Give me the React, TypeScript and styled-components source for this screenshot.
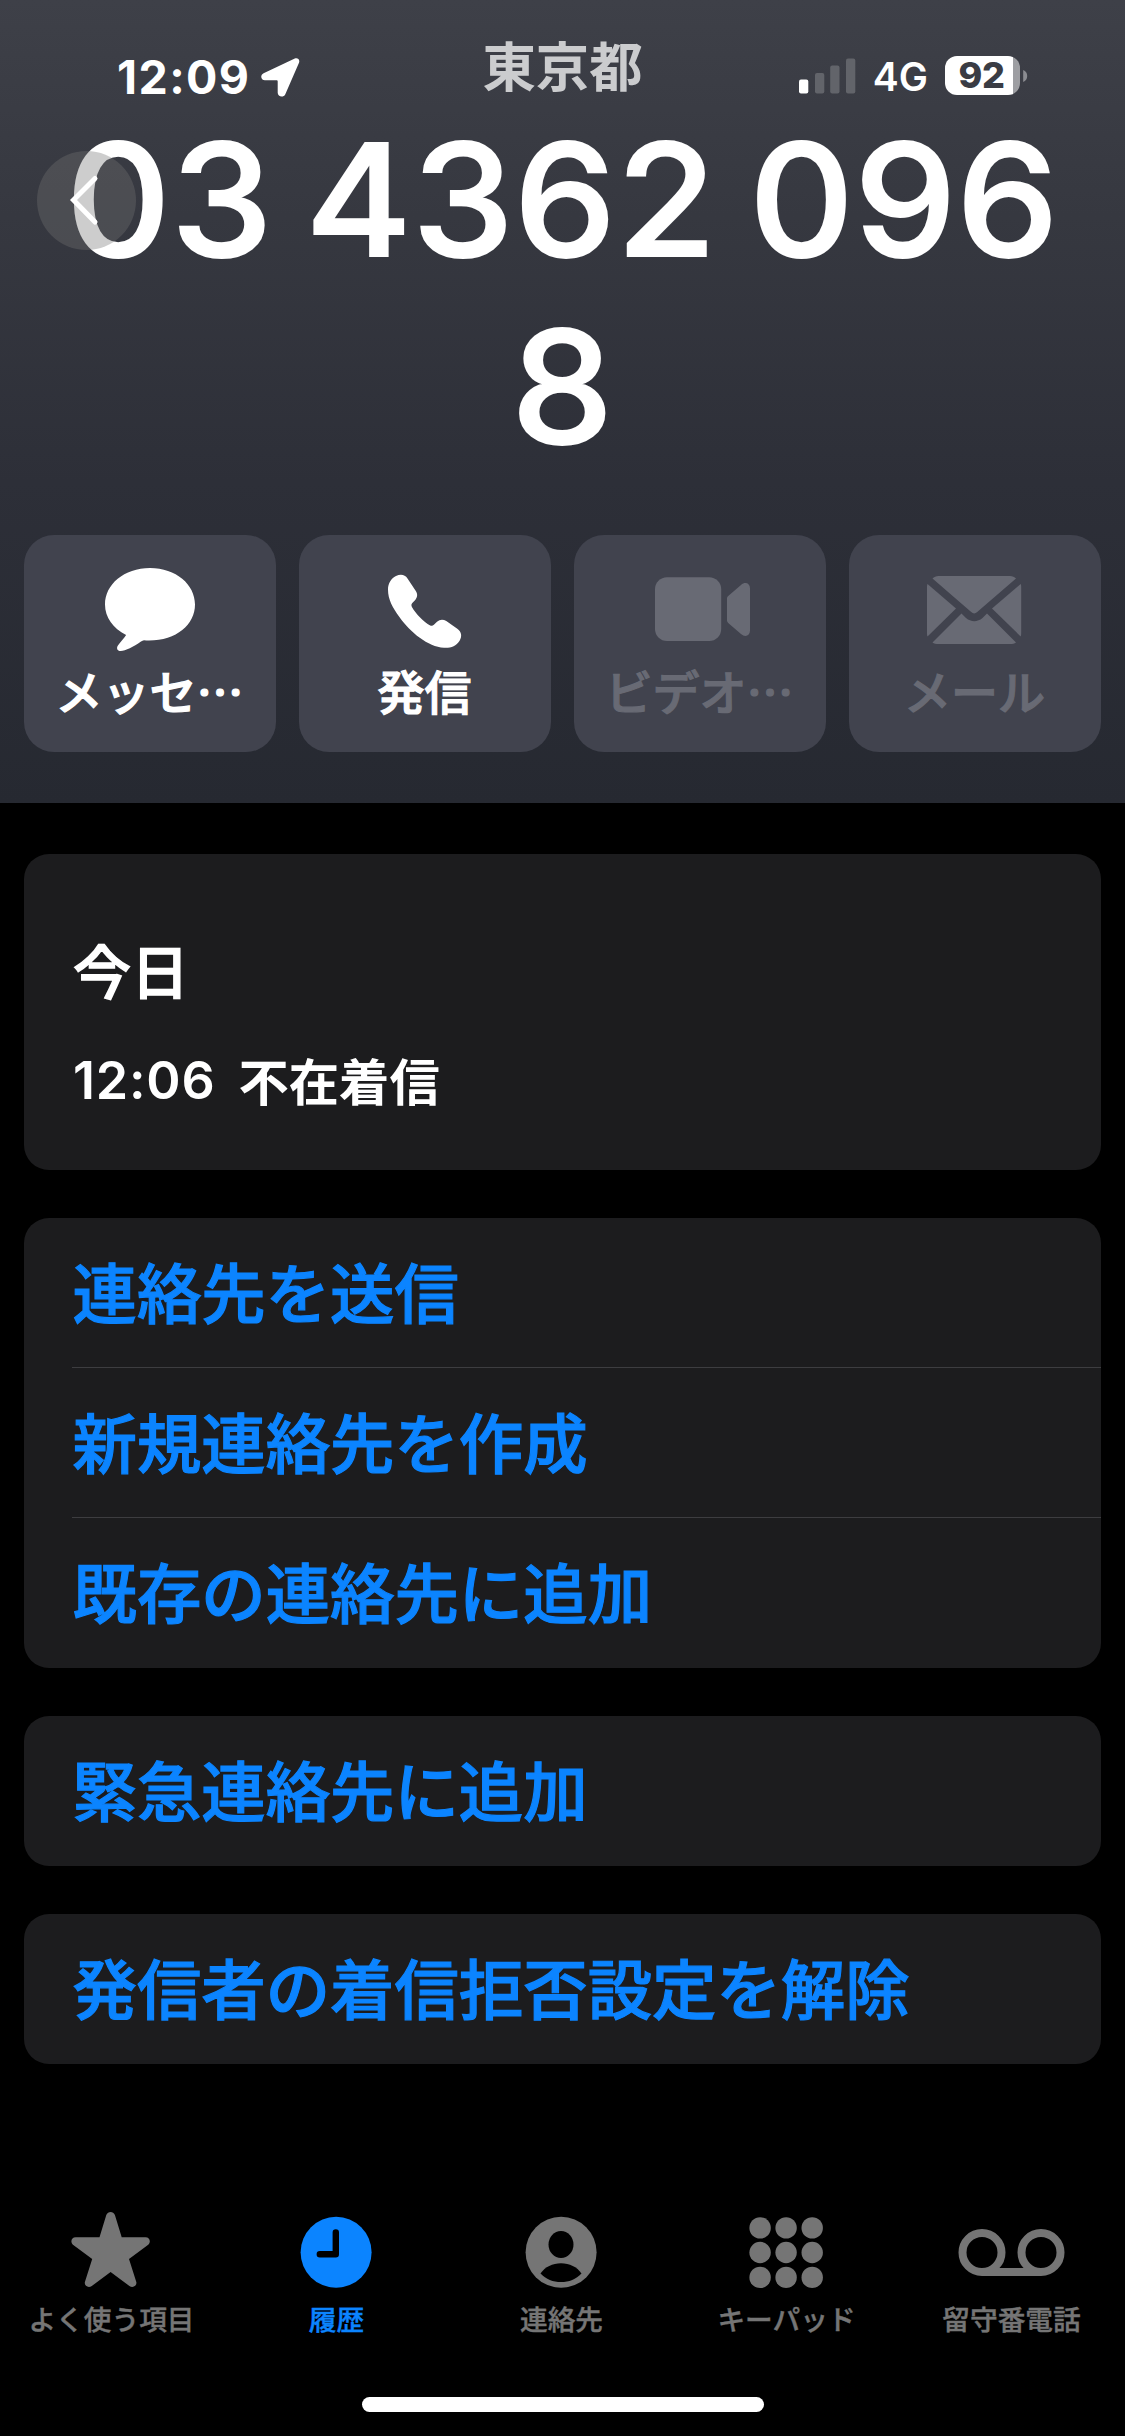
import React from "react";
import styled, { createGlobalStyle } from "styled-components";

const GlobalStyle = createGlobalStyle`
  * { box-sizing: border-box; }
  html, body { margin: 0; background: #000; }
  body { font-family: "Noto Sans CJK JP", sans-serif; -webkit-font-smoothing: antialiased; }
  button { font: inherit; border: 0; padding: 0; margin: 0; background: none; color: inherit; }
`;

const Screen = styled.div`
  position: relative;
  width: 1125px;
  height: 2436px;
  display: flex;
  flex-direction: column;
  background: #000;
  color: #fff;
  overflow: hidden;
`;

const Header = styled.header`
  position: relative;
  height: 803px;
  display: flex;
  flex-direction: column;
  background: linear-gradient(#3e4048 0%, #363840 27%, #2d2f38 60%, #262931 100%);
`;

const StatusBar = styled.div`
  height: 106px;
  padding: 40px 97px 0;
  display: grid;
  grid-template-columns: 1fr auto 1fr;
  align-items: start;
`;

const StatusLeft = styled.div`
  display: flex;
  align-items: center;
  gap: 11px;
  height: 74px;
  padding-left: 20px;
`;

const Clock = styled.span`
  font: 700 46.5px/74px Inter, sans-serif;
  letter-spacing: 1.4px;
`;

const Region = styled.span`
  font-size: 53.4px;
  font-weight: 700;
  line-height: 48px;
  color: #cbccce;
`;

const StatusRight = styled.div`
  display: flex;
  align-items: center;
  justify-content: flex-end;
  height: 71px;
`;

const Carrier = styled.span`
  font: 600 39px/71px Inter, sans-serif;
  margin: 2px 17px 0 17px;
`;

const Battery = styled.div`
  width: 75px;
  height: 39px;
  border-radius: 12px;
  background: linear-gradient(90deg, #fff 68px, #9d9ea2 68px);
  color: #3a3c44;
  font: 800 36px/39px Inter, sans-serif;
  letter-spacing: -0.5px;
  padding-right: 2px;
  text-align: center;
`;

const PhoneNumber = styled.h1`
  margin: 0;
  font: 500 155.5px/187px Inter, sans-serif;
  text-align: center;
  height: 429px;
  letter-spacing: 0.4px;
  word-spacing: -10.5px;
  -webkit-text-stroke: 2px currentColor;
`;

const NumberLine = styled.div`
  white-space: nowrap;
  transform: scaleX(1.041);
`;

const BackButton = styled.button`
  position: absolute;
  left: 37px;
  top: 151px;
  width: 99px;
  height: 99px;
  border-radius: 50%;
  background: rgba(114, 114, 114, 0.355);
  display: grid;
  place-items: center;
`;

const Actions = styled.div`
  display: grid;
  grid-template-columns: repeat(4, 1fr);
  gap: 23px;
  padding: 0 24px;
`;

const Action = styled.button<{ $disabled?: boolean }>`
  height: 217px;
  border-radius: 30px;
  background: #41434e;
  color: ${(p) => (p.$disabled ? "#686a74" : "#fff")};
  display: flex;
  flex-direction: column;
  align-items: center;
  padding-top: 27px;
`;

const ActionLabel = styled.span`
  font-size: 47px;
  font-weight: 500;
  line-height: 60px;
  margin-top: 4px;
  margin-left: -1px;
  -webkit-text-stroke: 1.2px currentColor;
  white-space: nowrap;
`;

const Content = styled.main`
  display: flex;
  flex-direction: column;
  gap: 48px;
  padding: 51px 24px 0;
`;

const Card = styled.section`
  background: #1c1c1e;
  border-radius: 25px;
  overflow: hidden;
`;

const CallLog = styled(Card)`
  height: 316px;
  padding: 79px 49px 0;
`;

const Day = styled.h2`
  margin: 0;
  font-size: 58px;
  font-weight: 500;
  line-height: 72px;
  -webkit-text-stroke: 1.4px currentColor;
`;

const Call = styled.div`
  display: flex;
  align-items: center;
  gap: 23px;
  height: 60px;
  margin-top: 44px;
`;

const CallTime = styled.span`
  font: 600 52px/60px Inter, sans-serif;
  letter-spacing: 0.8px;
  padding-top: 4px;
`;

const CallKind = styled.span`
  font-size: 50.3px;
  font-weight: 700;
  line-height: 60px;
`;

const LinkRow = styled.button`
  display: flex;
  align-items: center;
  width: 100%;
  height: 150px;
  padding: 0 0 0 48px;
`;

const LinkText = styled.span<{ $divider?: boolean }>`
  flex: 1;
  height: 150px;
  text-align: left;
  padding-left: 0.5px;
  font-size: 64.4px;
  font-weight: 500;
  line-height: 145px;
  -webkit-text-stroke: 1.2px currentColor;
  color: #0b84ff;
  border-bottom: ${(p) => (p.$divider ? "1px solid #3d3d40" : "0")};
`;

const TabBar = styled.nav`
  margin-top: auto;
  height: 231px;
  display: grid;
  grid-template-columns: repeat(5, 225px);
`;

const Tab = styled.button<{ $active?: boolean }>`
  display: flex;
  flex-direction: column;
  align-items: center;
  justify-content: flex-start;
  padding-right: 1px;
  color: ${(p) => (p.$active ? "#0b84ff" : "#757575")};
`;

const TabLabel = styled.span`
  font-size: 27.7px;
  font-weight: 500;
  line-height: 40px;
  margin-top: 3px;
  margin-left: -1px;
  -webkit-text-stroke: 0.4px currentColor;
  white-space: nowrap;
`;

const HomeIndicator = styled.div`
  position: absolute;
  left: 362px;
  bottom: 24px;
  width: 402px;
  height: 15px;
  border-radius: 8px;
  background: #fff;
`;

const LocationArrow = () => (
  <svg width="39" height="39" viewBox="0 0 39 39" fill="currentColor">
    <path d="M2.600 15.200 33.800.6c2.700-1.300 5.400 1.200 4.200 4.100L24.200 36.400c-1.600 3.300-7.500 2.600-7.500-1.600V23.500c0-.8-.4-1.200-1.200-1.200H4C-.4 22.300-1 17 2.600 15.200Z" />
  </svg>
);

const Signal = () => (
  <svg width="57" height="36" viewBox="0 0 57 36" fill="#62646a">
    <rect x="0" y="21.500" width="9.300" height="14" rx="2" fill="#fff" />
    <rect x="16" y="15" width="9.300" height="20.500" rx="2" />
    <rect x="31.200" y="7.500" width="9.300" height="28" rx="2" />
    <rect x="47" y="0.500" width="9.300" height="35" rx="2" />
  </svg>
);

const BatteryCap = () => (
  <svg width="8" height="14" viewBox="0 0 8 14">
    <path d="M3.200 1C5.700 2 7.200 4.200 7.200 7S5.700 12 3.200 13Z" fill="#8b8c91" />
  </svg>
);

const Chevron = () => (
  <svg width="99" height="99" viewBox="0 0 99 99" fill="none">
    <path d="M58 27.500 36.500 49 58 71" stroke="#fff" strokeWidth="5" strokeLinecap="round" strokeLinejoin="miter" />
  </svg>
);

const Bubble = () => (
  <svg width="100" height="94" viewBox="100 562 100 94" fill="currentColor">
    <path d="M150 568c26 0 45 16.500 45 36.500S176.500 640.500 149 640.500c-1.800 0-3.500 0-5-.2-1 0-2 .6-3 1.300-7.500 5.200-15.500 9.400-20.300 9.400-3.600 0-4.600-3-2.600-5.800 2.400-3.200 5.600-6.600 8-10.200C113 628.500 105 617 105 604.500 105 584.500 124 568 150 568Z" />
  </svg>
);

const Phone = () => (
  <svg width="100" height="94" viewBox="375 562 100 94" fill="currentColor">
    <path d="M396 576c5-2.200 9-1.200 11.500 2.500l8.300 12.500c2.200 3.400 1.600 6.400-.8 9.200l-2.700 2.900c-1.100 1.300-1.100 2.400-.4 3.800 3.500 6.300 11.700 14.800 18.300 18.500 1.500.6 2.500.4 3.700-.7l3.100-2.900c2.900-2.600 6-2.800 9.300-.7l11 7.700c4.300 3 5 7.600 2.300 12-3.600 5.500-8.800 7.400-15.600 7-16-1-33.500-15.300-44.600-30.800C392.500 607.500 388 599.500 388 589.500 388 583.800 391 578.200 396 576Z" />
  </svg>
);

const Video = () => (
  <svg width="100" height="94" viewBox="650 562 100 94" fill="currentColor" overflow="visible">
    <rect x="655" y="577.300" width="66.200" height="63.800" rx="12" />
    <path d="M727 598.500c0-1 .4-1.700 1.200-2.400L741 585c4-3.500 9-2 9 3.500v42c0 5.500-5 7-9 3.500l-12.800-11c-.8-.7-1.200-1.500-1.200-2.500Z" />
  </svg>
);

const Mail = () => (
  <svg width="100" height="94" viewBox="925 562 100 94" fill="currentColor">
    <path d="M932.500 578.500c1.500-1.600 3.500-2.500 6-2.500h71.500c2.500 0 4.500.9 6 2.500L977.200 612c-1.900 1.900-4.100 1.900-6 0Z" />
    <path d="M927.500 584 956 608.500 927.500 636.500C927 635 927 634 927 632V588c0-2 0-3 .5-4Z" />
    <path d="M1020.700 584 992 608.500 1020.700 636.500c.5-1.500.5-2.500.5-4.500V588c0-2 0-3-.5-4Z" />
    <path d="M961.500 613.500 966 618c5 4.200 11.500 4.200 16.500 0l4.500-4.500L1016 642.500c-1.500 1-3.500 1.500-6 1.500H938.500c-2.500 0-4.500-.5-6-1.500Z" />
  </svg>
);

const StarIcon = () => (
  <svg width="110" height="90" viewBox="57.500 2205 110 90" fill="currentColor">
    <path d="M106.800 2215c1.600-4 7-4 8.600 0l6.800 22.300H146c4.600 0 5.700 5 2.400 7.700L129.500 2259l7.300 23c1 4-3.500 6.400-6.900 4L111.100 2272 92.300 2286c-3.400 2.400-7.900 0-6.900-4l7.300-23L73.800 2245c-3.300-2.700-2.200-7.700 2.400-7.700H100Z" />
  </svg>
);

const RecentsIcon = () => (
  <svg width="110" height="90" viewBox="282.500 2205 110 90">
    <circle cx="336.600" cy="2252.300" r="35.500" fill="currentColor" />
    <path d="M336.300 2232.500V2254.300H320.300" fill="none" stroke="#000" strokeWidth="6.400" strokeLinecap="round" strokeLinejoin="round" />
  </svg>
);

const ContactIcon = () => (
  <svg width="110" height="90" viewBox="507.500 2205 110 90">
    <circle cx="561.600" cy="2252.300" r="35.500" fill="currentColor" />
    <ellipse cx="561.500" cy="2244.500" rx="12.500" ry="13.500" fill="#000" />
    <path d="M541 2273.500C545.500 2267 553 2263.300 561.500 2263.300S577.500 2267 582 2273.500C576.500 2279.500 569.500 2282 561.500 2282S546.500 2279.500 541 2273.500Z" fill="#000" />
  </svg>
);

const KeypadIcon = () => (
  <svg width="110" height="90" viewBox="732.500 2205 110 90" fill="currentColor">
    {[2227.9, 2252.5, 2277.4].map((y) =>
      [760.6, 786.6, 812.7].map((x) => <circle key={`${x}-${y}`} cx={x} cy={y} r="10.700" />)
    )}
  </svg>
);

const VoicemailIcon = () => (
  <svg width="110" height="90" viewBox="957.500 2205 110 90" fill="none" stroke="currentColor" strokeWidth="8">
    <circle cx="982.500" cy="2252.500" r="19.500" />
    <circle cx="1041.500" cy="2252.500" r="19.500" />
    <path d="M982.500 2272H1041.500" />
  </svg>
);

const actions = [
  { label: "メッセ…", icon: <Bubble />, disabled: false },
  { label: "発信", icon: <Phone />, disabled: false },
  { label: "ビデオ…", icon: <Video />, disabled: true },
  { label: "メール", icon: <Mail />, disabled: true },
];

const linkGroups = [
  ["連絡先を送信", "新規連絡先を作成", "既存の連絡先に追加"],
  ["緊急連絡先に追加"],
  ["発信者の着信拒否設定を解除"],
];

const tabs = [
  { label: "よく使う項目", icon: <StarIcon /> },
  { label: "履歴", icon: <RecentsIcon />, active: true },
  { label: "連絡先", icon: <ContactIcon /> },
  { label: "キーパッド", icon: <KeypadIcon /> },
  { label: "留守番電話", icon: <VoicemailIcon /> },
];

export default function App() {
  return (
    <>
      <GlobalStyle />
      <Screen lang="ja">
        <Header>
          <StatusBar>
            <StatusLeft>
              <Clock>12:09</Clock>
              <LocationArrow />
            </StatusLeft>
            <Region>東京都</Region>
            <StatusRight>
              <Signal />
              <Carrier>4G</Carrier>
              <Battery>92</Battery>
              <BatteryCap />
            </StatusRight>
          </StatusBar>
          <PhoneNumber>
            <NumberLine>03 4362 096</NumberLine>
            <NumberLine>8</NumberLine>
          </PhoneNumber>
          <Actions>
            {actions.map((a) => (
              <Action key={a.label} $disabled={a.disabled}>
                {a.icon}
                <ActionLabel>{a.label}</ActionLabel>
              </Action>
            ))}
          </Actions>
          <BackButton aria-label="戻る">
            <Chevron />
          </BackButton>
        </Header>
        <Content>
          <CallLog>
            <Day>今日</Day>
            <Call>
              <CallTime>12:06</CallTime>
              <CallKind>不在着信</CallKind>
            </Call>
          </CallLog>
          {linkGroups.map((group) => (
            <Card key={group[0]}>
              {group.map((text, i) => (
                <LinkRow key={text}>
                  <LinkText $divider={i < group.length - 1}>{text}</LinkText>
                </LinkRow>
              ))}
            </Card>
          ))}
        </Content>
        <TabBar>
          {tabs.map((t) => (
            <Tab key={t.label} $active={t.active}>
              {t.icon}
              <TabLabel>{t.label}</TabLabel>
            </Tab>
          ))}
        </TabBar>
        <HomeIndicator />
      </Screen>
    </>
  );
}
